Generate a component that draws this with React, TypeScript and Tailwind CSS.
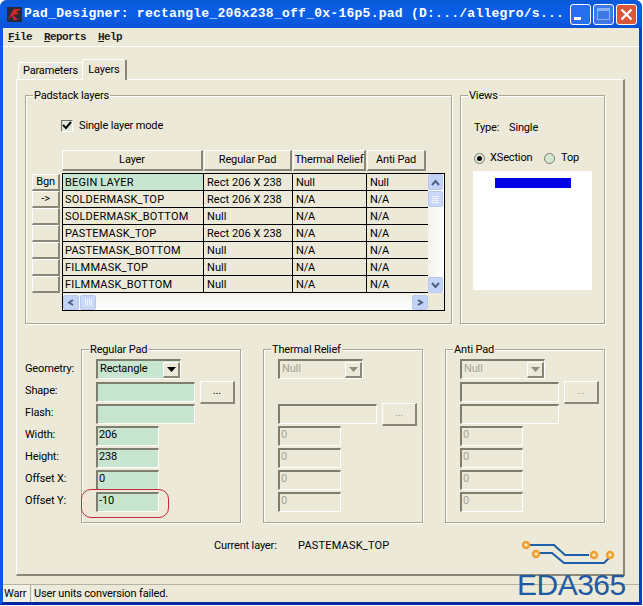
import React from "react";

const font = { fontFamily: 'Roboto, "Liberation Sans", Arial, sans-serif' };

function Group({ title, className, children }: { title: string; className: string; children?: React.ReactNode }) {
  return (
    <div className={"relative border border-[#a9a694] shadow-[1px_1px_0_#fff,inset_1px_1px_0_#fff] " + className}>
      <span className="absolute left-[7px] top-[-8px] bg-[#ece9d8] px-[1px] text-[11px] leading-[16px] text-black">{title}</span>
      {children}
    </div>
  );
}

function Raised({ className, children }: { className: string; children?: React.ReactNode }) {
  return (
    <div className={"flex items-center justify-center border-t border-l border-t-white border-l-white border-r-2 border-b-2 border-r-[#8a8778] border-b-[#8a8778] bg-[#ece9d8] text-[11px] " + className}>
      {children}
    </div>
  );
}

function Field({ w, value, on }: { w: string; value?: string; on: boolean }) {
  return (
    <div className={"flex h-[20px] items-center border-t-2 border-l-2 border-r border-b border-t-[#7f7d6d] border-l-[#7f7d6d] border-r-white border-b-white pb-[2px] pl-[1px] text-[11px] " + w + (on ? " bg-[#c8e6cf] text-black" : " bg-[#ece9d8] text-[#a5a397]")}>
      {value}
    </div>
  );
}

function Combo({ value, on }: { value: string; on: boolean }) {
  return (
    <div className={"flex h-[20px] w-[85px] items-center justify-between border-t-2 border-l-2 border-r border-b border-t-[#7f7d6d] border-l-[#7f7d6d] border-r-white border-b-white pl-[2px] text-[11px] " + (on ? "bg-[#c8e6cf] text-black" : "bg-[#ece9d8] text-[#a5a397]")}>
      <span>{value}</span>
      <Raised className="h-[16px] w-[17px]">
        <svg width="9" height="5" viewBox="0 0 9 5"><path d="M0 0h9L4.5 5z" fill={on ? "#000" : "#8f8d80"} /></svg>
      </Raised>
    </div>
  );
}

function PadGroup({ title, w, on, shapeRow, vals }: { title: string; w: string; on: boolean; shapeRow: boolean; vals: string[] }) {
  return (
    <Group title={title} className={"h-[174px] pl-[14px] pt-[9px] " + w}>
      <Combo value={vals[0]} on={on} />
      <div className="mt-[3px] flex h-[20px] items-center">
        {shapeRow && (
          <>
            <Field w="w-[99px]" on={on} />
            <Raised className={"ml-[5px] h-[23px] w-[35px] " + (on ? "text-black" : "text-[#a5a397]")}>...</Raised>
          </>
        )}
      </div>
      <div className="mt-[2px] flex h-[20px] items-center">
        <Field w="w-[99px]" on={on} />
        {!shapeRow ? <Raised className="ml-[5px] h-[23px] w-[35px] text-[#a5a397]">...</Raised> : null}
      </div>
      {vals.slice(1).map((v, i) => (
        <div key={i} className="mt-[2px]">
          <Field w="w-[63px]" value={v} on={on} />
        </div>
      ))}
    </Group>
  );
}

const rows = [
  ["BEGIN LAYER", "Rect 206 X 238", "Null", "Null"],
  ["SOLDERMASK_TOP", "Rect 206 X 238", "N/A", "N/A"],
  ["SOLDERMASK_BOTTOM", "Null", "N/A", "N/A"],
  ["PASTEMASK_TOP", "Rect 206 X 238", "N/A", "N/A"],
  ["PASTEMASK_BOTTOM", "Null", "N/A", "N/A"],
  ["FILMMASK_TOP", "Null", "N/A", "N/A"],
  ["FILMMASK_BOTTOM", "Null", "N/A", "N/A"],
];

function ScrollBtn({ d, className }: { d: string; className: string }) {
  return (
    <div className={"flex items-center justify-center rounded-[2px] border border-[#b9c9ee] bg-[#c3d4f7] " + className}>
      <svg width="9" height="7" viewBox="0 0 9 7" fill="none" stroke="#4d6185" strokeWidth="2"><path d={d} /></svg>
    </div>
  );
}

function WinBtn({ className, children }: { className: string; children: React.ReactNode }) {
  return <div className={"flex h-[21px] w-[21px] items-center justify-center rounded-[3px] border border-white " + className}>{children}</div>;
}

export default function App() {
  return (
    <div className="h-[606px] w-[643px] overflow-hidden bg-white tracking-[-0.15px]" style={font}>
      <div className="relative h-[605px] w-[642px] rounded-t-[7px] border-l-[3px] border-r-[3px] border-b-[3px] border-l-[#0a5be0] border-r-[#0b3fc4] border-b-[#04269e] bg-[#ece9d8]">
        {/* Title bar */}
        <div className="-ml-[3px] -mr-[3px] flex h-[28px] items-center rounded-t-[7px] bg-gradient-to-b from-[#0a5ad8] via-[#0a5fe8] to-[#0b52d6] pl-[7px] pr-[5px]">
          <svg width="15" height="15" viewBox="0 0 15 15" className="shrink-0">
            <rect width="15" height="15" fill="#2a2a3a" />
            <path d="M1 12L7 2h7L9 5l3 2-6 1 5 5H7L5 9z" fill="#d8262a" />
          </svg>
          <span className="ml-[2px] flex-1 whitespace-nowrap text-[13px] font-bold tracking-[0.26px] text-white" style={{ fontFamily: '"Liberation Mono", monospace' }}>
            Pad_Designer: rectangle_206x238_off_0x-16p5.pad (D:.../allegro/s...
          </span>
          <div className="flex gap-[2px]">
            <WinBtn className="bg-[#2a6cf0]"><span className="mt-[9px] mr-[6px] h-[3px] w-[7px] bg-white" /></WinBtn>
            <WinBtn className="border-[#8fb0f0] bg-[#3f78e6]"><span className="h-[12px] w-[13px] border border-t-[3px] border-[#8fb0f0]" /></WinBtn>
            <WinBtn className="bg-[#d9583a]">
              <svg width="13" height="13" viewBox="0 0 13 13" stroke="#fff" strokeWidth="2.4"><path d="M1.5 1.5l10 10M11.5 1.5l-10 10" /></svg>
            </WinBtn>
          </div>
        </div>

        {/* Menu */}
        <div className="flex h-[19px] items-center gap-[12px] border-b border-b-white pl-[5px] text-[11px] font-bold tracking-[-0.6px] text-[#222]" style={{ fontFamily: '"Liberation Mono", monospace' }}>
          <span><u>F</u>ile</span>
          <span><u>R</u>eports</span>
          <span><u>H</u>elp</span>
        </div>

        {/* Tabs */}
        <div className="ml-[15px] mt-[12px] flex h-[20px] items-end text-[11px] text-black">
          <div className="flex h-[17px] w-[64px] items-center justify-center rounded-t-[2px] border-t border-l border-white pt-[1px]">Parameters</div>
          <div className="relative z-10 flex h-[21px] w-[45px] translate-y-[1px] items-center justify-center rounded-t-[2px] border-t border-l border-r-2 border-t-white border-l-white border-r-[#8a8778] bg-[#ece9d8]">Layers</div>
        </div>

        {/* Tab page */}
        <div className="ml-[13px] h-[497px] w-[609px] border-t border-l border-r-2 border-b-2 border-t-white border-l-white border-r-[#8a8778] border-b-[#8a8778] pl-[8px] pt-[15px]">
          <div className="flex gap-[8px]">
            <Group title="Padstack layers" className="h-[229px] w-[427px]">
              <div className="ml-[35px] mt-[23px] flex h-[13px] items-center gap-[6px] text-[11px]">
                <div className="flex h-[12px] w-[12px] items-center justify-center border-t border-l border-t-[#716f64] border-l-[#716f64] border-r border-b border-r-white border-b-white bg-[#dfe8d8]">
                  <svg width="10" height="9" viewBox="0 0 10 9" fill="none" stroke="#000" strokeWidth="2"><path d="M1 4l3 3 5-6" /></svg>
                </div>
                <span className="translate-y-[1px]">Single layer mode</span>
              </div>
              <div className="ml-[36px] mt-[18px] flex h-[21px] text-[11px]">
                <Raised className="w-[141px]">Layer</Raised>
                <Raised className="ml-[1px] w-[88px]">Regular Pad</Raised>
                <Raised className="ml-[1px] w-[73px] whitespace-nowrap">Thermal Relief</Raised>
                <Raised className="ml-[1px] w-[59px]">Anti Pad</Raised>
              </div>
              <div className="ml-[6px] mt-[2px] flex">
                <div className="w-[28px] pt-[1px]">
                  {["Bgn", "->", "", "", "", "", ""].map((t, i) => (
                    <Raised key={i} className="h-[17px] w-[28px] text-[11px]">{t}</Raised>
                  ))}
                </div>
                <div className="ml-[2px] h-[138px] w-[383px] border border-black">
                  <div className="flex h-[120px]">
                    <div className="w-[365px]">
                      {rows.map((r, i) => (
                        <div key={i} className="flex h-[17px] border-b border-black text-[11px] leading-[18px]">
                          <div className={"w-[141px] border-r border-black pl-[2px] tracking-[0.2px] " + (i === 0 ? "bg-[#c8e6cf]" : "")}>{r[0]}</div>
                          <div className="w-[89px] border-r border-black pl-[3px] tracking-[0.05px]">{r[1]}</div>
                          <div className="w-[74px] border-r border-black pl-[3px]">{r[2]}</div>
                          <div className="w-[61px] pl-[3px]">{r[3]}</div>
                        </div>
                      ))}
                    </div>
                    <div className="flex h-[119px] w-[16px] flex-col justify-between bg-gradient-to-r from-[#f4f3ec] to-white">
                      <div>
                        <ScrollBtn d="M1 6l3.5-4L8 6" className="h-[16px] w-[15px]" />
                        <div className="mt-[1px] flex h-[16px] w-[15px] flex-col items-center justify-center gap-[1px] rounded-[2px] border border-[#b9c9ee] bg-[#c9d8f8]">
                          <span className="h-[1px] w-[7px] bg-[#eef3fe]" />
                          <span className="h-[1px] w-[7px] bg-[#eef3fe]" />
                          <span className="h-[1px] w-[7px] bg-[#eef3fe]" />
                          <span className="h-[1px] w-[7px] bg-[#eef3fe]" />
                        </div>
                      </div>
                      <ScrollBtn d="M1 1l3.5 4L8 1" className="h-[16px] w-[15px]" />
                    </div>
                  </div>
                  <div className="flex h-[16px] w-[365px] items-center justify-between bg-gradient-to-b from-[#f4f3ec] to-white">
                    <div className="flex">
                      <ScrollBtn d="M6 1L2 3.5 6 6" className="h-[15px] w-[16px]" />
                      <div className="ml-[1px] flex h-[15px] w-[16px] items-center justify-center gap-[1px] rounded-[2px] border border-[#b9c9ee] bg-[#c9d8f8]">
                        <span className="h-[7px] w-[1px] bg-[#eef3fe]" />
                        <span className="h-[7px] w-[1px] bg-[#eef3fe]" />
                        <span className="h-[7px] w-[1px] bg-[#eef3fe]" />
                        <span className="h-[7px] w-[1px] bg-[#eef3fe]" />
                      </div>
                    </div>
                    <ScrollBtn d="M2 1l4 2.5L2 6" className="h-[15px] w-[16px]" />
                  </div>
                </div>
              </div>
            </Group>

            <Group title="Views" className="h-[229px] w-[145px]">
              <div className="ml-[13px] mt-[24px] flex h-[16px] items-center text-[11px]">
                <span className="w-[35px]">Type:</span>
                <span>Single</span>
              </div>
              <div className="ml-[13px] mt-[14px] flex h-[16px] items-center text-[11px]">
                <span className="flex h-[11px] w-[11px] items-center justify-center rounded-full border border-[#7d7b6c] bg-[#dfe8d8]"><span className="h-[5px] w-[5px] rounded-full bg-black" /></span>
                <span className="ml-[5px] w-[54px]">XSection</span>
                <span className="h-[11px] w-[11px] rounded-full border border-[#7d7b6c] bg-[#d4e6d4]" />
                <span className="ml-[6px]">Top</span>
              </div>
              <div className="ml-[12px] mt-[5px] h-[119px] w-[119px] bg-white pl-[22px] pt-[7px]">
                <div className="h-[10px] w-[76px] bg-[#0000e6]" />
              </div>
            </Group>
          </div>

          <div className="mt-[25px] flex">
            <div className="w-[56px] pt-[9px] text-[11px]">
              {["Geometry:", "Shape:", "Flash:", "Width:", "Height:", "Offset X:", "Offset Y:"].map((l) => (
                <div key={l} className="flex h-[22px] items-center">{l}</div>
              ))}
            </div>
            <div className="relative">
              <div className="flex gap-[22px]">
                <PadGroup title="Regular Pad" w="w-[160px]" on shapeRow vals={["Rectangle", "206", "238", "0", "-10"]} />
                <PadGroup title="Thermal Relief" w="w-[160px]" on={false} shapeRow={false} vals={["Null", "0", "0", "0", "0"]} />
                <PadGroup title="Anti Pad" w="w-[160px]" on={false} shapeRow vals={["Null", "0", "0", "0", "0"]} />
              </div>
              <div className="absolute left-0 top-[140px] h-[29px] w-[88px] rounded-[10px] border border-[#c4283a]" />
            </div>
          </div>

          <div className="ml-[189px] mt-[15px] flex text-[11px] leading-[16px]">
            <span className="w-[84px]">Current layer:</span>
            <span className="tracking-[0.2px]">PASTEMASK_TOP</span>
          </div>
        </div>

        {/* Status bar */}
        <div className="mt-[8px] flex h-[18px] border-t border-[#b5b2a2] text-[11px] leading-[18px]">
          <div className="w-[28px] border-r border-[#b5b2a2] bg-[#f3f1e6] pl-[1px]">Warr</div>
          <div className="ml-[1px] flex-1 border-l border-white pl-[1px]">User units conversion failed.</div>
        </div>

        {/* Watermark logo */}
        <div className="absolute right-[-3px] top-[537px] h-[64px] w-[125px]">
          <svg width="125" height="34" viewBox="0 0 125 34" fill="none" className="absolute left-0 top-0">
            <path d="M9 8h28l11 10h24" stroke="#1f5fa8" strokeWidth="2" />
            <path d="M22 16h13l12 10h40l6-6" stroke="#1f5fa8" strokeWidth="2" />
            <circle cx="9" cy="8" r="3" stroke="#f0a030" strokeWidth="2.5" fill="#fbe3b8" />
            <circle cx="19" cy="17" r="3" stroke="#f0a030" strokeWidth="2.5" fill="#fbe3b8" />
            <circle cx="77" cy="18" r="3" stroke="#f0a030" strokeWidth="2.5" fill="#fbe3b8" />
            <circle cx="93" cy="18" r="3" stroke="#f0a030" strokeWidth="2.5" fill="#fbe3b8" />
          </svg>
          <span className="absolute left-0 top-[31px] text-[30px] leading-[34px] tracking-[-0.5px] text-[#1f5ba5]" style={{ fontFamily: '"Liberation Sans", Arial, sans-serif' }}>EDA365</span>
        </div>
      </div>
    </div>
  );
}
